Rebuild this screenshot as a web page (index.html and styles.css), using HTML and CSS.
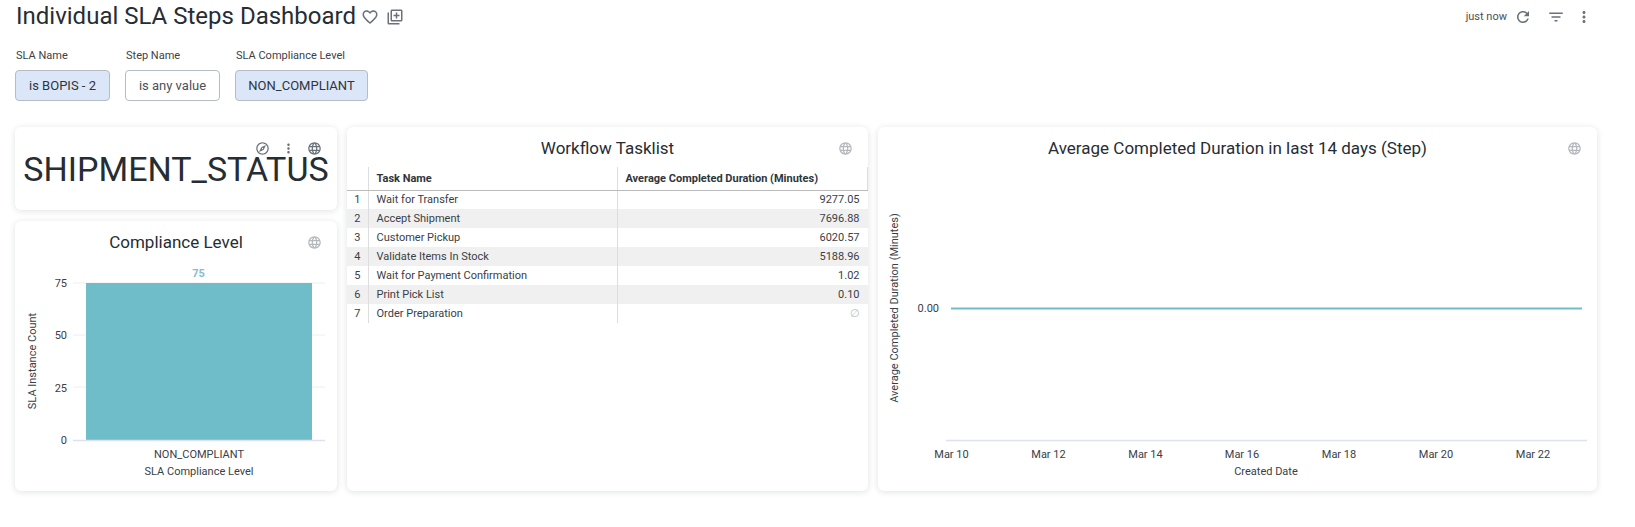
FILE: index.html
```html
<!DOCTYPE html>
<html lang="en">
<head>
<meta charset="utf-8">
<title>Individual SLA Steps Dashboard</title>
<link rel="stylesheet" href="styles.css">
</head>
<body>
<svg class="defs" width="0" height="0" aria-hidden="true">
  <symbol id="i-globe" viewBox="0 0 24 24"><path d="M11.99 2C6.47 2 2 6.48 2 12s4.47 10 9.99 10C17.52 22 22 17.52 22 12S17.52 2 11.99 2zm6.93 6h-2.95c-.32-1.25-.78-2.45-1.38-3.56 1.84.63 3.37 1.91 4.33 3.56zM12 4.04c.83 1.2 1.48 2.53 1.91 3.96h-3.82c.43-1.43 1.08-2.76 1.91-3.96zM4.26 14C4.1 13.36 4 12.69 4 12s.1-1.36.26-2h3.38c-.08.66-.14 1.32-.14 2 0 .68.06 1.34.14 2H4.26zm.82 2h2.95c.32 1.25.78 2.45 1.38 3.56-1.84-.63-3.37-1.9-4.33-3.56zm2.95-8H5.08c.96-1.66 2.49-2.93 4.33-3.56C8.81 5.55 8.35 6.75 8.03 8zM12 19.96c-.83-1.2-1.48-2.53-1.91-3.96h3.82c-.43 1.43-1.08 2.76-1.91 3.96zM14.34 14H9.66c-.09-.66-.16-1.32-.16-2 0-.68.07-1.35.16-2h4.68c.09.65.16 1.32.16 2 0 .68-.07 1.34-.16 2zm.25 5.56c.6-1.11 1.06-2.31 1.38-3.56h2.95c-.96 1.65-2.49 2.93-4.33 3.56zM16.36 14c.08-.66.14-1.32.14-2 0-.68-.06-1.34-.14-2h3.38c.16.64.26 1.31.26 2s-.1 1.36-.26 2h-3.38z"/></symbol>
  <symbol id="i-more" viewBox="0 0 24 24"><path d="M12 8c1.1 0 2-.9 2-2s-.9-2-2-2-2 .9-2 2 .9 2 2 2zm0 2c-1.1 0-2 .9-2 2s.9 2 2 2 2-.9 2-2-.9-2-2-2zm0 6c-1.1 0-2 .9-2 2s.9 2 2 2 2-.9 2-2-.9-2-2-2z"/></symbol>
</svg>

<header class="topbar">
  <div class="title-group">
    <h1 class="page-title">Individual SLA Steps Dashboard</h1>
    <svg class="icon icon-heart" viewBox="0 0 24 24"><path d="M16.5 3c-1.74 0-3.41.81-4.5 2.09C10.91 3.81 9.24 3 7.5 3 4.42 3 2 5.42 2 8.5c0 3.78 3.4 6.86 8.55 11.54L12 21.35l1.45-1.32C18.6 15.36 22 12.28 22 8.5 22 5.42 19.58 3 16.5 3zm-4.4 15.55l-.1.1-.1-.1C7.14 14.24 4 11.39 4 8.5 4 6.5 5.5 5 7.5 5c1.54 0 3.04.99 3.57 2.36h1.87C13.46 5.99 14.96 5 16.5 5c2 0 3.5 1.5 3.5 3.5 0 2.89-3.14 5.74-7.9 10.05z"/></svg>
    <svg class="icon icon-board" viewBox="0 0 24 24"><path d="M4 6H2v14c0 1.1.9 2 2 2h14v-2H4V6zm16-4H8c-1.1 0-2 .9-2 2v12c0 1.1.9 2 2 2h12c1.1 0 2-.9 2-2V4c0-1.1-.9-2-2-2zm0 14H8V4h12v12zm-7-2h2v-3h3V9h-3V6h-2v3h-3v2h3z"/></svg>
  </div>
  <div class="actions">
    <span class="updated">just now</span>
    <svg class="icon icon-refresh" viewBox="0 0 24 24"><path d="M17.65 6.35C16.2 4.9 14.21 4 12 4c-4.42 0-7.99 3.58-7.99 8s3.57 8 7.99 8c3.73 0 6.84-2.55 7.73-6h-2.08c-.82 2.33-3.04 4-5.65 4-3.31 0-6-2.69-6-6s2.69-6 6-6c1.66 0 3.14.69 4.22 1.78L13 11h7V4l-2.35 2.35z"/></svg>
    <svg class="icon icon-filter" viewBox="0 0 24 24"><path d="M10 18h4v-2h-4v2zM3 6v2h18V6H3zm3 7h12v-2H6v2z"/></svg>
    <svg class="icon icon-more"><use href="#i-more"/></svg>
  </div>
</header>

<section class="filters">
  <div class="filter">
    <span class="filter-label">SLA Name</span>
    <span class="pill pill-active pill-sla">is BOPIS - 2</span>
  </div>
  <div class="filter">
    <span class="filter-label">Step Name</span>
    <span class="pill pill-step">is any value</span>
  </div>
  <div class="filter">
    <span class="filter-label">SLA Compliance Level</span>
    <span class="pill pill-active pill-level">NON_COMPLIANT</span>
  </div>
</section>

<main class="grid">
  <div class="col-left">
    <article class="card card-single">
      <div class="card-tools">
        <svg class="tool tool-dark" viewBox="0 0 24 24"><path d="M12 2C6.48 2 2 6.48 2 12s4.48 10 10 10 10-4.48 10-10S17.52 2 12 2zm0 18c-4.41 0-8-3.59-8-8s3.59-8 8-8 8 3.59 8 8-3.59 8-8 8zm-5.5-2.5l7.51-3.49L17.5 6.5 9.99 9.99 6.5 17.5zm5.5-6.6c.61 0 1.1.49 1.1 1.1s-.49 1.1-1.1 1.1-1.1-.49-1.1-1.1.49-1.1 1.1-1.1z"/></svg>
        <svg class="tool tool-dark"><use href="#i-more"/></svg>
        <svg class="tool tool-dark"><use href="#i-globe"/></svg>
      </div>
      <div class="single-value">SHIPMENT_STATUS</div>
    </article>

    <article class="card card-bar">
      <div class="card-tools"><svg class="tool"><use href="#i-globe"/></svg></div>
      <h2 class="card-title">Compliance Level</h2>
      <svg class="chart" viewBox="15 263 322 228" width="322" height="228">
        <g class="grid-lines">
          <line x1="73" x2="325" y1="283" y2="283"/>
          <line x1="73" x2="325" y1="335" y2="335"/>
          <line x1="73" x2="325" y1="387" y2="387"/>
        </g>
        <rect class="bar" x="86" y="283" width="226" height="157"/>
        <line class="axis" x1="73" x2="325" y1="440.5" y2="440.5"/>
        <text class="data-label" x="198.5" y="277" text-anchor="middle">75</text>
        <g class="tick" text-anchor="end">
          <text x="67" y="287">75</text>
          <text x="67" y="339">50</text>
          <text x="67" y="392">25</text>
          <text x="67" y="444">0</text>
        </g>
        <text class="tick" x="199" y="458" text-anchor="middle">NON_COMPLIANT</text>
        <text class="tick" x="199" y="475" text-anchor="middle">SLA Compliance Level</text>
        <text class="tick" transform="translate(36 361) rotate(-90)" text-anchor="middle">SLA Instance Count</text>
      </svg>
    </article>
  </div>

  <article class="card card-table">
    <div class="card-tools"><svg class="tool"><use href="#i-globe"/></svg></div>
    <h2 class="card-title card-title-table">Workflow Tasklist</h2>
    <table class="data-table">
      <thead>
        <tr><th class="c-index"></th><th class="c-name">Task Name</th><th class="c-value">Average Completed Duration (Minutes)</th></tr>
      </thead>
      <tbody>
        <tr><td class="c-index">1</td><td class="c-name">Wait for Transfer</td><td class="c-num">9277.05</td></tr>
        <tr><td class="c-index">2</td><td class="c-name">Accept Shipment</td><td class="c-num">7696.88</td></tr>
        <tr><td class="c-index">3</td><td class="c-name">Customer Pickup</td><td class="c-num">6020.57</td></tr>
        <tr><td class="c-index">4</td><td class="c-name">Validate Items In Stock</td><td class="c-num">5188.96</td></tr>
        <tr><td class="c-index">5</td><td class="c-name">Wait for Payment Confirmation</td><td class="c-num">1.02</td></tr>
        <tr><td class="c-index">6</td><td class="c-name">Print Pick List</td><td class="c-num">0.10</td></tr>
        <tr><td class="c-index">7</td><td class="c-name">Order Preparation</td><td class="c-num c-null">∅</td></tr>
      </tbody>
    </table>
  </article>

  <article class="card card-line">
    <div class="card-tools"><svg class="tool"><use href="#i-globe"/></svg></div>
    <h2 class="card-title">Average Completed Duration in last 14 days (Step)</h2>
    <svg class="chart" viewBox="878 169 719 322" width="719" height="322">
      <line class="series" x1="951" x2="1582" y1="308.5" y2="308.5"/>
      <line class="axis" x1="946" x2="1587" y1="440.5" y2="440.5"/>
      <text class="tick" x="939" y="312" text-anchor="end">0.00</text>
      <text class="tick" transform="translate(898 308) rotate(-90)" text-anchor="middle">Average Completed Duration (Minutes)</text>
      <g class="tick" text-anchor="middle">
        <text x="951.5" y="458">Mar 10</text>
        <text x="1048.5" y="458">Mar 12</text>
        <text x="1145.5" y="458">Mar 14</text>
        <text x="1242" y="458">Mar 16</text>
        <text x="1339" y="458">Mar 18</text>
        <text x="1436" y="458">Mar 20</text>
        <text x="1533" y="458">Mar 22</text>
      </g>
      <text class="tick" x="1266" y="475" text-anchor="middle">Created Date</text>
    </svg>
  </article>
</main>
</body>
</html>
```
FILE: styles.css
```css
* { box-sizing: border-box; }

html, body {
  margin: 0;
  background: #fff;
}

body {
  font-family: Roboto, "Liberation Sans", sans-serif;
  color: #262d33;
  height: 527px;
  overflow: hidden;
}

.defs { position: absolute; }

.topbar {
  display: flex;
  justify-content: space-between;
  align-items: center;
  height: 33px;
  padding: 0 42px 0 16px;
}

.title-group, .actions {
  display: flex;
  align-items: center;
}

.page-title {
  margin: 0;
  font-size: 24px;
  font-weight: 400;
  line-height: 33px;
  color: #262d33;
}

.icon {
  width: 18px;
  height: 18px;
  fill: #6a7178;
  flex: none;
}

.icon-heart { margin-left: 5px; }
.icon-board { margin-left: 7px; }

.updated {
  font-size: 11px;
  color: #4a5158;
  margin-right: 7px;
}

.icon-filter { margin-left: 15px; }
.icon-more { margin-left: 10px; }

.filters {
  display: flex;
  gap: 15px;
  padding: 16px 0 0 15px;
}

.filter {
  display: flex;
  flex-direction: column;
}

.filter-label {
  font-size: 11px;
  line-height: 14px;
  margin-bottom: 7px;
  color: #3c4248;
  padding-left: 1px;
}

.pill {
  display: flex;
  align-items: center;
  justify-content: center;
  height: 31px;
  font-size: 13px;
  color: #4a5158;
  border: 1px solid #b6bcc3;
  border-radius: 4px;
  background: #fff;
}

.pill-active {
  background: #dbe6f9;
  color: #2f353b;
}

.pill-sla { width: 95px; }
.pill-step { width: 95px; }
.pill-level { width: 133px; }

.grid {
  display: grid;
  grid-template-columns: 322px 521px 719px;
  column-gap: 10px;
  height: 364px;
  margin: 26px 0 0 15px;
}

.col-left {
  display: flex;
  flex-direction: column;
  gap: 11px;
}

.card {
  position: relative;
  background: #fff;
  border-radius: 6px;
  box-shadow: 0 1px 6px rgba(30, 40, 60, 0.14);
  overflow: hidden;
}

.card-single {
  height: 83px;
  display: flex;
  align-items: center;
  justify-content: center;
  padding-bottom: 0;
}

.single-value {
  font-size: 34px;
  line-height: 40px;
  color: #262d33;
}

.card-bar { flex: 1; }

.card-tools {
  position: absolute;
  top: 14px;
  right: 15px;
  display: flex;
  gap: 11px;
}

.tool {
  width: 15px;
  height: 15px;
  fill: #b4b8bc;
  display: block;
}

.tool-dark { fill: #6a7178; }

.card-title {
  margin: 0;
  height: 42px;
  font-size: 17px;
  font-weight: 400;
  line-height: 42px;
  text-align: center;
  color: #262d33;
}

.card-title-table { height: 40px; line-height: 42px; }

.chart { display: block; }

.chart text {
  font-family: Roboto, "Liberation Sans", sans-serif;
  font-size: 11px;
  fill: #3a4046;
}

.grid-lines line { stroke: #eceef2; stroke-width: 1; }
.axis { stroke: #dfe1f2; stroke-width: 1.5; }
.bar { fill: #70bdca; }
.series { stroke: #70bdca; stroke-width: 2; }
.chart .data-label { fill: #85bdd0; font-weight: 700; }

.data-table {
  width: 100%;
  table-layout: fixed;
  border-collapse: collapse;
  font-size: 11px;
  color: #3a4046;
}

.data-table th {
  height: 23px;
  text-align: left;
  font-weight: 700;
  color: #2f353b;
  padding: 0 8px;
  border-bottom: 1px solid #bbb;
  border-right: 1px solid #ddd;
  white-space: nowrap;
}

.data-table td {
  height: 19px;
  padding: 0 8px;
  border-right: 1px solid #ddd;
}

.data-table th:last-child { padding-right: 0; }
.data-table td:last-child { border-right: 0; }

.data-table .c-index {
  width: 21px;
  padding: 0;
  text-align: center;
}

.data-table .c-name { width: 249px; }

.data-table tbody tr:nth-child(even) { background: #f0f0f0; }

.c-num { text-align: right; padding-right: 7px; }
.c-null { color: #b9bdc1; }
```
